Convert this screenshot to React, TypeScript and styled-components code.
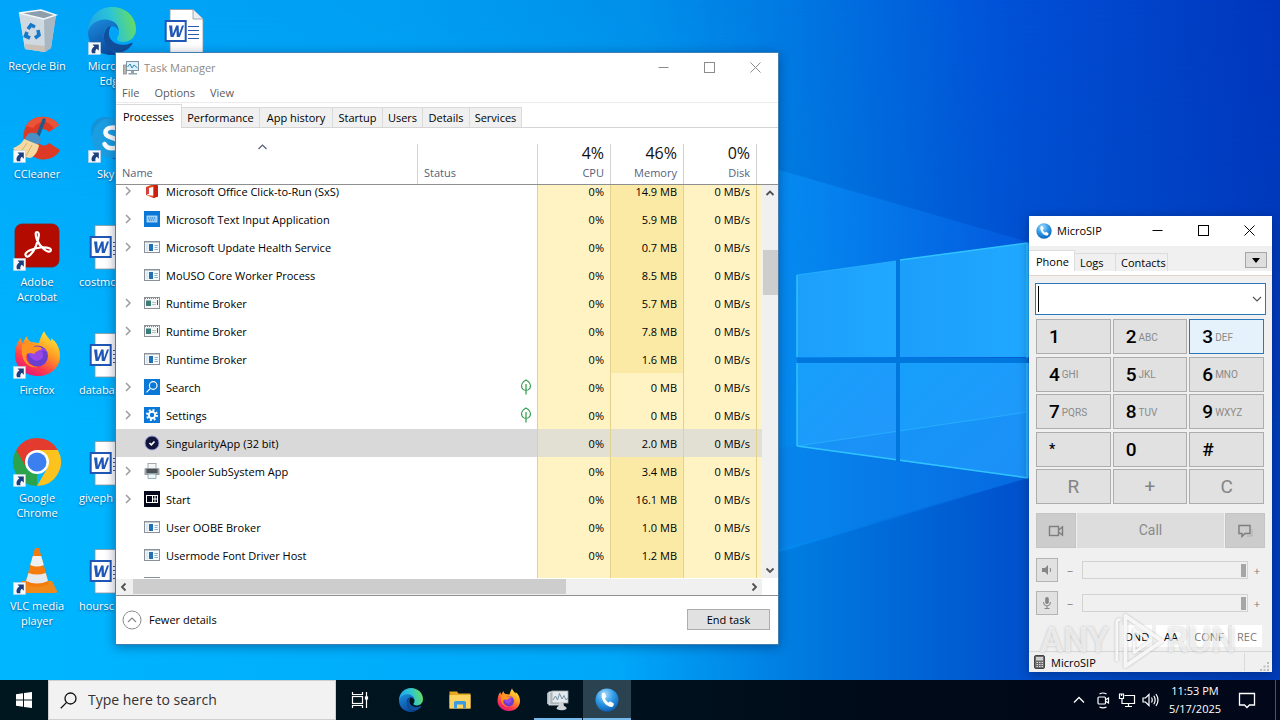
import React from 'react';
import styled, { createGlobalStyle } from 'styled-components';

const GlobalStyle = createGlobalStyle`
  *, *::before, *::after { box-sizing: border-box; }
  html, body { margin: 0; }
  body {
    font-family: "Open Sans", "Noto Sans", sans-serif;
    font-size: 11px;
    line-height: 15px;
    color: #000;
    overflow: hidden;
  }
  button, input { font: inherit; color: inherit; margin: 0; }
`;

/* ---------- Desktop ---------- */

const Screen = styled.div`
  display: flex;
  flex-direction: column;
  min-height: 100vh;
  position: relative;
  overflow: hidden;
  background: #0078d7;
`;

const WallpaperSvg = styled.svg`
  position: absolute;
  inset: 0;
  width: 100%;
  height: 100%;
`;

const DesktopArea = styled.main`
  position: relative;
  flex: 1;
  padding-top: 4px;
`;

const IconGrid = styled.div`
  display: grid;
  grid-template-columns: 74px 76px 74px;
  grid-auto-rows: 108px;
`;

const DesktopItem = styled.a<{ $start?: boolean }>`
  display: flex;
  flex-direction: column;
  align-items: ${(p) => (p.$start ? 'flex-start' : 'center')};
  gap: 2px;
  color: #fff;
  text-decoration: none;
  text-align: center;
  text-shadow: 0 1px 2px rgba(0, 40, 90, 0.7);

  svg { width: 52px; height: 52px; flex: none; ${(p) => (p.$start ? 'margin-left: 12px;' : '')} }
  span { padding: 0 4px; ${(p) => (p.$start ? 'padding-left: 5px;' : '')} }
`;

/* ---------- Shared window parts ---------- */

const AppWindow = styled.section`
  position: absolute;
  display: flex;
  flex-direction: column;
  box-shadow: 0 2px 10px rgba(0, 20, 60, 0.4);
`;

const TaskWindow = styled(AppWindow)`
  left: 115px;
  right: 501px;
  top: 52px;
  background: #fff;
  border: 1px solid #3f7fb4;
`;

const PhoneWindow = styled(AppWindow)`
  right: 8px;
  top: 216px;
  width: 243px;
  background: #f0f0f0;
`;

const TitleBar = styled.header<{ $muted?: boolean }>`
  display: flex;
  align-items: center;
  height: 30px;
  padding-left: 7px;
  padding-bottom: 1px;
  background: #fff;
  color: ${(p) => (p.$muted ? '#8b8b8b' : '#000')};

  > svg { width: 16px; height: 16px; margin-right: 5px; flex: none; }
`;

const TitleText = styled.h1`
  flex: 1;
  margin: 0;
  font-size: 11px;
  font-weight: 400;
`;

const CaptionButton = styled.button`
  width: 46px;
  height: 28px;
  padding: 0;
  border: 0;
  background: transparent;
  display: grid;
  place-items: center;

  svg { width: 11px; height: 11px; }
`;

/* ---------- Task Manager ---------- */

const MenuRow = styled.nav`
  display: flex;
  gap: 15px;
  height: 20px;
  padding: 1px 6px 0;
  border-bottom: 1px solid #ececec;
`;

const MenuButton = styled.button`
  padding: 0;
  border: 0;
  background: none;
  color: #5c5c5c;
  height: 16px;
`;

const TabRow = styled.div`
  display: flex;
  align-items: flex-end;
  height: 25px;
  border-bottom: 1px solid #d5d5d5;
`;

const Tab = styled.button<{ $active?: boolean; $w: number }>`
  width: ${(p) => p.$w}px;
  height: ${(p) => (p.$active ? 24 : 20)}px;
  margin-bottom: ${(p) => (p.$active ? -1 : 0)}px;
  padding: 0;
  border: 1px solid #dadada;
  border-bottom: 0;
  border-left: 0;
  background: ${(p) => (p.$active ? '#fff' : '#f0f0f0')};
  line-height: 18px;
  white-space: nowrap;
`;

const ListArea = styled.div`
  display: flex;
`;

const ProcTable = styled.table`
  flex: 1;
  min-width: 0;
  table-layout: fixed;
  border-collapse: separate;
  border-spacing: 0;
`;

const HeadCell = styled.th<{ $right?: boolean; $plain?: boolean }>`
  position: relative;
  height: 57px;
  padding: ${(p) => (p.$plain ? '0' : '0 7px 4px 6px')};
  vertical-align: bottom;
  text-align: ${(p) => (p.$right ? 'right' : 'left')};
  font-weight: 400;
  color: #55627c;
  border-bottom: 1px solid #8f8f8f;
  background: ${(p) => (p.$plain ? '#fff' : 'linear-gradient(#d2d2d2, #d2d2d2) right bottom / 1px 40px no-repeat')};

  strong { display: block; font-weight: 400; font-size: 16px; line-height: 24px; color: #111; }
`;

const SortMark = styled.svg`
  position: absolute;
  left: 50%;
  top: 16px;
  width: 9px;
  height: 6px;
  margin-left: -9px;
`;

const heat = {
  none: 'transparent',
  light: '#fff3c4',
  medium: '#faeaa6',
  selected: '#e2dfd3',
};

const ProcRow = styled.tr<{ $selected?: boolean }>`
  background: ${(p) => (p.$selected ? '#d9d9d9' : 'transparent')};
`;

const ProcCell = styled.td<{ $heat?: keyof typeof heat }>`
  padding: 0;
  background: ${(p) => heat[p.$heat || 'none']};
  border-right: ${(p) => (p.$heat ? '1px solid #e3d28e' : '0')};
`;

const EdgeCell = styled(ProcCell)`
  border-right: 0;
`;

const StatusCell = styled(ProcCell)`
  border-right: 1px solid #e3d28e;
`;

const Clip = styled.div<{ $h: number }>`
  height: ${(p) => p.$h}px;
  overflow: hidden;
  display: flex;
  align-items: ${(p) => (p.$h < 28 && p.$h > 9 ? 'flex-end' : 'flex-start')};
`;

const CellBody = styled.div<{ $right?: boolean }>`
  flex: 1;
  min-width: 0;
  height: 28px;
  flex-shrink: 0;
  display: flex;
  align-items: center;
  justify-content: ${(p) => (p.$right ? 'flex-end' : 'flex-start')};
  padding-right: ${(p) => (p.$right ? 6 : 0)}px;
  white-space: nowrap;
`;

const Expander = styled.span`
  width: 28px;
  padding-left: 9px;
  display: flex;
  flex: none;
  svg { width: 6px; height: 10px; }
`;

const ProcIcon = styled.span`
  display: flex;
  margin-right: 6px;
  svg { width: 16px; height: 16px; }
`;

const ScrollColumn = styled.div`
  flex: none;
  width: 16px;
  display: flex;
  flex-direction: column;
`;

const HeadFiller = styled.div`
  height: 57px;
  border-bottom: 1px solid #8f8f8f;
`;

const VTrack = styled.div`
  flex: 1;
  display: flex;
  flex-direction: column;
  align-items: flex-end;
  background: #f0f0f0;
`;

const ArrowButton = styled.button`
  width: 16px;
  height: 16px;
  padding: 0;
  border: 0;
  flex: none;
  background: #f0f0f0;
  display: grid;
  place-items: center;
  svg { width: 10px; height: 10px; }
`;

const VThumb = styled.div`
  width: 15px;
  height: 45px;
  margin: 49px 0 auto;
  background: #cdcdcd;
`;

const HTrack = styled.div`
  display: flex;
  height: 16px;
  margin: 1px 16px 0 0;
  background: #f0f0f0;
`;

const HThumb = styled.div`
  width: 67%;
  height: 15px;
  margin: 0 auto 0 1px;
  background: #cdcdcd;
`;

const Footer = styled.footer`
  display: flex;
  align-items: center;
  justify-content: space-between;
  height: 49px;
  padding: 0 8px 1px 6px;
  border-top: 1px solid #8f8f8f;
`;

const FewerButton = styled.button`
  display: flex;
  align-items: center;
  gap: 7px;
  padding: 0;
  border: 0;
  background: none;
  svg { width: 20px; height: 20px; }
`;

const EndTask = styled.button`
  width: 83px;
  height: 21px;
  padding: 0;
  border: 1px solid #adadad;
  background: #e1e1e1;
`;

/* ---------- MicroSIP ---------- */

const PhoneTabs = styled.div`
  display: flex;
  align-items: flex-end;
  height: 25px;
`;

const PhoneTab = styled.button<{ $active?: boolean; $w: number }>`
  width: ${(p) => p.$w}px;
  height: ${(p) => (p.$active ? 21 : 18)}px;
  padding: 0 0 0 ${(p) => (p.$active ? 7 : 5)}px;
  text-align: left;
  border: 1px solid #dcdcdc;
  border-bottom: 0;
  border-left: 0;
  background: ${(p) => (p.$active ? '#fff' : '#f0f0f0')};
  line-height: 17px;
`;

const MenuDrop = styled.button`
  width: 22px;
  height: 16px;
  margin: 0 5px 3px auto;
  padding: 0;
  border: 1px solid #a6a6a6;
  background: #dedede;
  display: grid;
  place-items: center;
  svg { width: 8px; height: 5px; }
`;

const PhoneStrip = styled.div`
  background: #fff;
  height: 5px;
  border-bottom: 1px solid #e5d3c8;
`;

const PhoneBody = styled.div`
  padding: 7px 6px 0;
`;

const DialBox = styled.label`
  display: flex;
  align-items: center;
  height: 32px;
  padding: 3px 3px 3px 2px;
  border: 1px solid #2a78b8;
  background: #fff;

  input {
    flex: 1;
    min-width: 0;
    height: 26px;
    padding: 0 2px;
    border: 0;
    border-left: 1px solid #000;
    outline: 0;
    background: transparent;
    font-size: 16px;
  }
  svg { width: 10px; height: 8px; }
`;

const Keypad = styled.div`
  display: grid;
  grid-template-columns: repeat(3, 1fr);
  grid-auto-rows: 35px;
  gap: 2px;
  align-content: space-between;
  min-height: 185px;
  margin: 4px 2px 0 1px;
`;

const Key = styled.button<{ $hot?: boolean; $func?: boolean; $small?: boolean }>`
  display: flex;
  align-items: center;
  justify-content: ${(p) => (p.$func ? 'center' : 'flex-start')};
  gap: 2px;
  padding: 0 0 0 ${(p) => (p.$func ? 0 : 12)}px;
  border: 1px solid ${(p) => (p.$hot ? '#2a78b8' : '#adadad')};
  background: ${(p) => (p.$hot ? '#e5f1fb' : '#e1e1e1')};
  font-family: Roboto, "Liberation Sans", sans-serif;
  font-size: ${(p) => (p.$small ? 14 : 19)}px;
  color: ${(p) => (p.$func ? '#848484' : '#000')};

  b { font-weight: 500; }
  small { font-size: 10px; color: #8a8a8a; padding-top: 1px; }
`;

const CallRow = styled.div`
  display: grid;
  grid-template-columns: 40px 1fr 40px;
  gap: 1px;
  height: 35px;
  margin: 9px 1px 10px 1px;
`;

const CallButton = styled.button<{ $side?: boolean }>`
  display: grid;
  place-items: center;
  padding: 0;
  border: ${(p) => (p.$side ? '1px solid #c4c4c4' : '0')};
  background: ${(p) => (p.$side ? '#cccccc' : '#dddddd')};
  color: #8a8a8a;
  font-family: Roboto, "Liberation Sans", sans-serif;
  font-size: 14px;
  svg { width: 16px; height: 16px; }
`;

const VolumeRow = styled.div`
  display: grid;
  grid-template-columns: 22px 24px 1fr 18px;
  align-items: center;
  height: 24px;
  margin: 0 0 9px 1px;
  color: #777;

  > span { text-align: center; }
`;

const MuteButton = styled.button`
  height: 24px;
  padding: 0;
  border: 1px solid #b4b4b4;
  background: #e1e1e1;
  display: grid;
  place-items: center;
  svg { width: 12px; height: 12px; }
`;

const VolumeSlider = styled.input`
  appearance: none;
  width: 100%;
  height: 18px;
  border: 1px solid #d2d2d2;
  background: #f0f0f0;
  padding: 0 1px;

  &::-webkit-slider-thumb {
    appearance: none;
    width: 5px;
    height: 13px;
    background: #a6a6a6;
  }
`;

const ModeRow = styled.div`
  display: flex;
  justify-content: flex-end;
  gap: 4px;
  padding: 1px 4px 4px 0;
`;

const ModeButton = styled.button<{ $dim?: boolean; $w: number }>`
  width: ${(p) => p.$w}px;
  height: 22px;
  padding: 0;
  border: 0;
  background: #fff;
  color: ${(p) => (p.$dim ? '#7a7a7a' : '#000')};
`;

const StatusBar = styled.footer`
  display: flex;
  align-items: center;
  height: 21px;
  padding: 0 3px 0 5px;
  border-top: 1px solid #d7d7d7;
  gap: 6px;
  svg { width: 11px; height: 14px; }
  span { flex: 1; }
`;

const GripBox = styled.i`
  display: flex;
  align-items: flex-end;
  justify-content: flex-end;
  width: 25px;
  height: 18px;
  border-left: 1px solid #dadada;
  svg { width: 9px; height: 9px; }
`;

const Watermark = styled.div`
  position: absolute;
  left: 11px;
  bottom: 0;
  width: 196px;
  height: 62px;
  display: flex;
  align-items: center;
  justify-content: space-between;
  pointer-events: none;
  font-family: Roboto, sans-serif;
  font-size: 35px;
  font-weight: 500;
  line-height: 40px;
  color: rgba(255, 255, 255, 0.65);
  text-shadow: 0 0 3px rgba(0, 0, 0, 0.22);
  svg { flex: none; width: 54px; height: 60px; filter: drop-shadow(0 0 1px rgba(0, 0, 0, 0.3)); }
`;

/* ---------- Taskbar ---------- */

const Taskbar = styled.nav`
  position: relative;
  display: flex;
  height: 40px;
  background: linear-gradient(90deg, #001720 0%, #00131f 45%, #000a18 70%, #020819 100%);
  color: #fff;
`;

const StartButton = styled.button`
  width: 48px;
  padding: 0;
  border: 0;
  background: none;
  display: grid;
  place-items: center;
  svg { width: 18px; height: 18px; }
`;

const SearchBox = styled.label`
  display: flex;
  align-items: center;
  gap: 11px;
  width: 288px;
  height: 40px;
  padding: 0 11px;
  background: #f2f2f2;
  border: 1px solid #cfcfcf;
  svg { width: 17px; height: 17px; }
  input {
    flex: 1;
    min-width: 0;
    border: 0;
    padding: 0;
    outline: 0;
    background: transparent;
    color: #333;
    font-size: 14px;
    line-height: 20px;
  }
  input::placeholder { color: #333; opacity: 1; }
`;

const AppStrip = styled.div`
  display: flex;
  gap: 1px;
  margin-left: 3px;
`;

const TaskButton = styled.button<{ $state?: 'running' | 'active' }>`
  width: 48px;
  padding: 0;
  border: 0;
  display: grid;
  place-items: center;
  background: ${(p) => (p.$state === 'active' ? '#2b4350' : 'transparent')};
  box-shadow: ${(p) => (p.$state ? 'inset 0 -2px 0 #76b9ed' : 'none')};
  svg { width: 24px; height: 24px; }
`;

const Tray = styled.div`
  display: flex;
  align-items: center;
  margin-left: auto;
  height: 40px;
  padding-right: 4px;
`;

const TrayButton = styled.button`
  width: 24px;
  height: 40px;
  padding: 0;
  border: 0;
  background: none;
  display: grid;
  place-items: center;
  svg { width: 18px; height: 18px; }
`;

const Clock = styled.time`
  width: 64px;
  text-align: center;
  line-height: 18px;
`;

const Notify = styled(TrayButton)`
  width: 40px;
`;

const ShowDesktop = styled.span`
  width: 9px;
  height: 40px;
  border-right: 1px solid #4b5561;
`;

/* ---------- Drawings ---------- */

const Wallpaper = () => (
  <WallpaperSvg viewBox="0 0 1280 720" preserveAspectRatio="none" aria-hidden="true">
    <defs>
      <linearGradient id="sky" x1="0" y1="0" x2="1" y2="0">
        <stop offset="0" stopColor="#00a6f9" />
        <stop offset="0.3" stopColor="#009ff3" />
        <stop offset="0.5" stopColor="#0090ea" />
        <stop offset="0.62" stopColor="#0078e2" />
        <stop offset="0.78" stopColor="#0052d8" />
        <stop offset="1" stopColor="#0036bd" />
      </linearGradient>
      <linearGradient id="low" x1="0" y1="0" x2="1" y2="0">
        <stop offset="0" stopColor="#00b6ff" />
        <stop offset="0.48" stopColor="#00a8fa" />
        <stop offset="0.62" stopColor="#007ce0" />
        <stop offset="0.8" stopColor="#0050cc" />
        <stop offset="1" stopColor="#003cba" />
      </linearGradient>
      <linearGradient id="lowFade" x1="0" y1="0" x2="0" y2="1">
        <stop offset="0" stopColor="#fff" stopOpacity="0" />
        <stop offset="0.6" stopColor="#fff" stopOpacity="1" />
      </linearGradient>
      <mask id="lowMask"><rect width="1280" height="720" fill="url(#lowFade)" /></mask>
      <linearGradient id="beam" x1="0" y1="0" x2="1" y2="0">
        <stop offset="0" stopColor="#0aa4ff" stopOpacity="0.9" />
        <stop offset="0.5" stopColor="#0a94ff" stopOpacity="0.8" />
        <stop offset="1" stopColor="#0a70f8" stopOpacity="0.5" />
      </linearGradient>
      <linearGradient id="pane" x1="0" y1="0" x2="1" y2="0">
        <stop offset="0" stopColor="#1c9ffb" />
        <stop offset="1" stopColor="#20a8ff" />
      </linearGradient>
      <linearGradient id="paneLow" x1="0" y1="0" x2="1" y2="1">
        <stop offset="0" stopColor="#169ffb" />
        <stop offset="1" stopColor="#2397fb" />
      </linearGradient>
    </defs>
    <rect width="1280" height="720" fill="url(#sky)" />
    <rect width="1280" height="720" fill="url(#low)" mask="url(#lowMask)" />
    <path d="M600 118 L1028 242 L1028 478 L780 552 L600 600 Z" fill="url(#beam)" opacity="0.6" />
    <path d="M600 475 L1028 412 L1028 478 L600 600 Z" fill="#0b7fe8" opacity="0.45" />
    <path d="M797 275 L896 261 V357 H797 Z" fill="url(#pane)" />
    <path d="M900 260 L1030 243 V357 H900 Z" fill="url(#pane)" />
    <path d="M797 363 H896 V460 L797 446 Z" fill="url(#paneLow)" />
    <path d="M900 363 H1030 V478 L900 461 Z" fill="url(#paneLow)" />
    <path d="M797 446 L1028 412 V478 Z" fill="#1489f2" opacity="0.45" />
    <path d="M797 275 V357 M797 363 V446 M797 446 L1028 478 M1027 243 V478 M900 260 L1028 243" fill="none" stroke="#30c4ff" strokeWidth="1.5" />
    <path d="M797 275 L896 261 M797 446 L1028 412" fill="none" stroke="#2bb8ff" strokeWidth="1" opacity="0.7" />
    <path d="M797 358 H1028 V363 H797 Z M896 260 H900 V462 H896 Z" fill="#0077dd" />
  </WallpaperSvg>
);

const Shortcut = () => (
  <g>
    <rect x="2.500" y="38.500" width="12" height="12" fill="#f7fafd" stroke="#bcd3e6" strokeWidth="0.600" />
    <path d="M6.500 40.500 H12.800 V46.800 L10.800 44.800 C9.500 45.800 9 47.500 9.500 49.200 H6 C4.800 46.500 5.800 44 8.400 42.400 Z" fill="#1d3f7d" />
  </g>
);

const BinArt = () => (
  <svg viewBox="0 0 52 52">
    <path d="M8 9 L30 6 L45 11 L40 44 L34 48 L14 45 Z" fill="#cdd7df" opacity="0.92" />
    <path d="M8 9 L33 15 L34 48 L14 45 Z" fill="#cfd9e1" />
    <path d="M33 15 L45 11 L40 44 L34 48 Z" fill="#a9b7c2" />
    <path d="M8 9 L30 6 L45 11 L33 15 Z" fill="#8c9eac" stroke="#f3f7fa" strokeWidth="1.400" />
    <path d="M14 40 L34 42 V48 L14 45 Z" fill="#c7b5a6" opacity="0.7" />
    <g fill="none" stroke="#1777c9" strokeWidth="3.600">
      <path d="M17 25 L20 21 L24 23" />
      <path d="M27 26 L28 31 L24 34" />
      <path d="M19 34 L14.500 32 L16 28" />
    </g>
  </svg>
);

const EdgeShape = ({ id }: { id: string }) => (
  <g>
    <defs>
      <linearGradient id={id + 'a'} x1="0" y1="0.500" x2="1" y2="0.300">
        <stop offset="0" stopColor="#1fa5e8" />
        <stop offset="0.500" stopColor="#2cc4d6" />
        <stop offset="1" stopColor="#6ade5a" />
      </linearGradient>
      <linearGradient id={id + 'b'} x1="0" y1="0" x2="0.500" y2="1">
        <stop offset="0" stopColor="#1c8fe0" />
        <stop offset="1" stopColor="#0a4a9e" />
      </linearGradient>
    </defs>
    <path d="M24 0 C38 0 48 10 48 22 C48 31 41 35 35 35 C31 35 29 33.500 29 31.500 C29 30 31 29 31 25.500 C31 20 26 15.500 19 15.500 C8 15.500 1 24 0 25 C0 10 11 0 24 0 Z" fill={`url(#${id}a)`} />
    <path d="M0 25 C1 19 8 12 18 12.500 C26 13 31 18 31 25 C31 22 27 19 23.500 19 C18 19 15 25 16 31 C17 40 25 47 33 46 C30 47.500 27 48 24 48 C10 48 0 38 0 25 Z" fill={`url(#${id}b)`} />
    <path d="M16 29 C15 40 25 47 33 45.500 C38 44 42 41 44.500 37 C45 36 44 35.500 43 36 C35 40 25 37 22 31 C20 27 21 21 23.500 19 C19 19 16 24 16 29 Z" fill="#114f9c" />
  </g>
);

const EdgeArt = () => (
  <svg viewBox="0 0 52 52">
    <g transform="translate(2 3)"><EdgeShape id="ed" /></g>
    <Shortcut />
  </svg>
);

const DocArt = () => (
  <svg viewBox="0 0 52 52">
    <path d="M9 5.500 H32 L42 15 V49 H9 Z" fill="#fff" stroke="#8a95a0" strokeWidth="0.8" />
    <path d="M32 5.500 V15 H42" fill="#e9eef3" stroke="#8a95a0" strokeWidth="0.8" />
    <path d="M27 22.500 H38 M27 26.500 H38 M27 30.500 H38 M27 34.500 H38" stroke="#2a5cb0" strokeWidth="1.200" />
    <rect x="4.700" y="17" width="20" height="20" fill="#fff" stroke="#1e57b5" strokeWidth="2" />
    <path d="M8 21.500 H11.200 L11.800 30 L15.200 21.500 H17.600 L18 30 L21 21.500 H23 L18.800 33 H15.800 L15.400 26 L12.600 33 H9.600 Z" fill="#1e57b5" />
  </svg>
);

const CCleanerArt = () => (
  <svg viewBox="0 0 52 52">
    <path d="M48 13 C40 2 22 2 15 14 C8 28 16 46 31 47.500 C39 48 46 44 49 38 L38 31 C35 35 29 34 26 29 C23 24 26 17 31 17 C34 17 36 18 38 20 Z" fill="#dc3a24" />
    <path d="M48 13 C40 2 22 2 15 14 L22 16 C29 8 38 8 43 17 Z" fill="#e95437" />
    <path d="M33 8 L26 26" stroke="#215a8d" strokeWidth="3.500" strokeLinecap="round" />
    <path d="M17 22 C22 19 29 22 30 28 L26 34 L13 28 Z" fill="#4a90c4" />
    <path d="M13 27 L28 33 C27 40 23 45 19 46 C12 45 5 42 2 36 C8 34 11 31 13 27 Z" fill="#f5d9a3" />
    <path d="M9 41 L16 31 M15 44 L21 33" stroke="#d8ae62" strokeWidth="1" />
    <Shortcut />
  </svg>
);

const SkypeArt = () => (
  <svg viewBox="0 0 52 52">
    <circle cx="19" cy="19" r="14" fill="#1492d8" />
    <circle cx="33" cy="34" r="14" fill="#0b63b8" />
    <circle cx="26" cy="26" r="20" fill="#1b9de2" />
    <path d="M33 19 C31 14.500 20 14 19.500 20.500 C19.500 27 33 24.500 33 31.500 C32.500 38 21 37.500 18.500 32" fill="none" stroke="#fff" strokeWidth="4.500" strokeLinecap="round" />
    <Shortcut />
  </svg>
);

const AcrobatArt = () => (
  <svg viewBox="0 0 52 52">
    <rect x="4" y="4" width="44" height="43" rx="7" fill="#b30b00" stroke="#8e1a12" strokeWidth="0.8" />
    <path d="M15 36 C12 32 22 28 30 27.500 C38 27 41 29 39.500 31 C37 34 29 27 26 20 C24 14 24.500 12 26 12 C29 12 28 18 25 26 C22 33 17 38.500 15 36 Z" fill="none" stroke="#fff" strokeWidth="2.200" />
    <Shortcut />
  </svg>
);

const FoxShape = ({ id }: { id: string }) => (
  <g>
    <defs>
      <linearGradient id={id} x1="0.800" y1="0.050" x2="0.250" y2="0.950">
        <stop offset="0" stopColor="#ffe83a" />
        <stop offset="0.400" stopColor="#ff9a22" />
        <stop offset="0.750" stopColor="#ff3a4e" />
        <stop offset="1" stopColor="#e01a78" />
      </linearGradient>
    </defs>
    <path d="M2 18 C3 12 6 9 7 8 C7 11 8 12 9 13 C11 8 13 6 13 6 C13 9 15 11 17 12 L25 13 C26 8 29 3 30 1 C32 6 35 8 37 11 C38 10 37 9 37 8 C43 12 46 19 46 26 C46 38 36 46 24 46 C11 46 1 37 1 25 C1 22 1.500 20 2 18 Z" fill={`url(#${id})`} />
    <circle cx="23.500" cy="26" r="10.500" fill="#6a3fd0" />
    <path d="M14 21 C18 16 29 15 33 22 C30 20 28 21 27 21 C30 23 30 28 26 30 C20 33 15 27 14 21 Z" fill="#9a47e8" />
    <path d="M8 15 C12 12 18 14 21 17 C24 16 28 17 28 19 C26 20 22 21 20 24 C18 23 15 22 12 25 C11 32 17 37 24 37 C14 39 6 31 8 15 Z" fill="#ff9420" />
  </g>
);

const FirefoxArt = () => (
  <svg viewBox="0 0 52 52">
    <g transform="translate(3 2)"><FoxShape id="fxd" /></g>
    <Shortcut />
  </svg>
);

const ChromeArt = () => (
  <svg viewBox="0 0 52 52">
    <path d="M26 26 L26 50 A24 24 0 0 1 5.200 14 Z" fill="#2ba24c" />
    <path d="M26 14 H46.800 A24 24 0 0 0 5.200 14 L15.600 32 Z" fill="#e33b2e" />
    <path d="M46.800 14 H26 L36.400 32 L26 50 A24 24 0 0 0 46.800 14 Z" fill="#fcc31e" />
    <circle cx="26" cy="26" r="12" fill="#fff" />
    <circle cx="26" cy="26" r="9.500" fill="#3b7ff0" />
    <Shortcut />
  </svg>
);

const VlcArt = () => (
  <svg viewBox="0 0 52 52">
    <path d="M11 37 H41 L46 47 Q46.500 49 44 49 H9 Q6.500 49 7.500 47 Z" fill="#f08a1c" />
    <path d="M24 4 H28 L38 40 Q26 46 14 40 Z" fill="#f57c0c" />
    <path d="M21.800 12 H30.200 L32.800 21 Q26 24 19.200 21 Z" fill="#eef0f2" />
    <path d="M17.500 29 Q26 32 34.700 29 L37 37 Q26 42 15 37 Z" fill="#e6e9ec" />
    <Shortcut />
  </svg>
);

const MonitorIcon = () => (
  <svg viewBox="0 0 16 16">
    <rect x="0.500" y="5" width="3" height="9" fill="#b9b3a6" stroke="#7a8890" strokeWidth="0.700" />
    <rect x="3.500" y="1.500" width="12" height="9" fill="#dff2fb" stroke="#7c95a5" />
    <path d="M4.500 7 L7 4 L9 8 L11 5 L14.500 8" fill="none" stroke="#2887b6" />
    <path d="M8 11 H11 V13 H14 V14.500 H5.500 V13 H8 Z" fill="#8fa4ae" />
  </svg>
);

const PhoneBall = ({ id }: { id: string }) => (
  <svg viewBox="0 0 24 24">
    <defs>
      <radialGradient id={id} cx="0.400" cy="0.250" r="0.800">
        <stop offset="0" stopColor="#a5dcff" />
        <stop offset="0.500" stopColor="#2f9be6" />
        <stop offset="1" stopColor="#0b5db4" />
      </radialGradient>
    </defs>
    <circle cx="12" cy="12" r="11.500" fill={`url(#${id})`} />
    <path d="M7 5 L9.500 4.500 L11.500 8.800 L10 10.300 C10.500 12 12 13.800 13.500 14.500 L15.200 13.300 L19 15.800 L18 18.500 C13 21 4.500 12 7 5 Z" fill="#fff" />
  </svg>
);

const MinGlyph = () => <svg viewBox="0 0 11 11"><path d="M0.500 5.500 H10.500" stroke="currentColor" /></svg>;
const MaxGlyph = () => <svg viewBox="0 0 11 11"><rect x="0.500" y="0.500" width="10" height="10" fill="none" stroke="currentColor" /></svg>;
const CloseGlyph = () => <svg viewBox="0 0 11 11"><path d="M0.500 0.500 L10.500 10.500 M10.500 0.500 L0.500 10.500" stroke="currentColor" /></svg>;

const CaptionButtons = () => (
  <>
    <CaptionButton aria-label="Minimize"><MinGlyph /></CaptionButton>
    <CaptionButton aria-label="Maximize"><MaxGlyph /></CaptionButton>
    <CaptionButton aria-label="Close"><CloseGlyph /></CaptionButton>
  </>
);

const chevrons = {
  up: 'M1.500 7 L5 3.500 L8.500 7',
  down: 'M1.500 3.500 L5 7 L8.500 3.500',
  left: 'M6.500 1.500 L3 5 L6.500 8.500',
  right: 'M3.500 1.500 L7 5 L3.500 8.500',
};

const Chevron = ({ dir }: { dir: keyof typeof chevrons }) => (
  <svg viewBox="0 0 10 10"><path d={chevrons[dir]} fill="none" stroke="#505050" strokeWidth="1.800" /></svg>
);

type IconKind = 'office' | 'keyboard' | 'exe' | 'broker' | 'search' | 'settings' | 'check' | 'printer' | 'start' | 'edge';

const RowIcon = ({ kind }: { kind: IconKind }) => {
  switch (kind) {
    case 'office':
      return (
        <svg viewBox="0 0 16 16">
          <path d="M2 4 L9.500 1 L14 2.500 V13.500 L9.500 15 L2 12 L9.500 12.800 V3.700 L5 5 V10.500 L2 12 Z" fill="#e8481c" />
          <path d="M9.500 1 L14 2.500 V13.500 L9.500 15 Z" fill="#c9200f" />
          <path d="M2 4 L5 5 V10.500 L2 12 Z" fill="#d3413c" />
        </svg>
      );
    case 'keyboard':
      return (
        <svg viewBox="0 0 16 16">
          <rect width="16" height="16" fill="#0a78d6" />
          <rect x="3" y="5" width="10" height="6" fill="#8cc5f3" stroke="#c6e3fa" strokeWidth="0.800" />
          <path d="M4 7 H12 M5 9 H11" stroke="#2b83cc" strokeDasharray="1 1" />
        </svg>
      );
    case 'exe':
      return (
        <svg viewBox="0 0 16 16">
          <rect x="0.500" y="2.500" width="15" height="11" fill="#fbfcfd" stroke="#8b9196" />
          <path d="M1 3.500 H15" stroke="#c2cbd1" />
          <rect x="1.500" y="4.500" width="3" height="8" fill="#d9ecf6" />
          <rect x="5" y="5" width="4" height="7" fill="#2470b0" />
          <path d="M10.500 6.500 H14 M10.500 8.500 H13.500 M10.500 10.500 H14" stroke="#85b3d6" />
        </svg>
      );
    case 'broker':
      return (
        <svg viewBox="0 0 16 16">
          <rect x="0.500" y="2.500" width="15" height="11" fill="#f4f6f6" stroke="#8b9196" />
          <path d="M1 3.500 H15" stroke="#7b858a" strokeDasharray="1 1" />
          <rect x="2" y="5.500" width="5" height="5.500" fill="#3c7c78" />
          <path d="M8 7.500 H12 M8 9.500 H12" stroke="#b6c4c4" />
          <path d="M13.500 5 V10" stroke="#3a5b5b" />
        </svg>
      );
    case 'search':
      return (
        <svg viewBox="0 0 16 16">
          <rect width="16" height="16" fill="#0a78d6" />
          <circle cx="9.200" cy="6.500" r="3.800" fill="none" stroke="#fff" strokeWidth="1.200" />
          <path d="M6.400 9.300 L2.500 13.300" stroke="#fff" strokeWidth="1.200" />
        </svg>
      );
    case 'settings':
      return (
        <svg viewBox="0 0 16 16">
          <rect width="16" height="16" fill="#0a78d6" />
          <circle cx="8" cy="8" r="3.200" fill="none" stroke="#fff" strokeWidth="2" />
          <circle cx="8" cy="8" r="5" fill="none" stroke="#fff" strokeWidth="2" strokeDasharray="1.960 1.960" />
        </svg>
      );
    case 'check':
      return (
        <svg viewBox="0 0 16 16">
          <circle cx="8" cy="8" r="7" fill="#12163a" stroke="#9a9ee0" strokeWidth="0.900" />
          <path d="M5.500 8 L7.400 9.800 L10.500 6.500" fill="none" stroke="#fff" strokeWidth="1.700" />
        </svg>
      );
    case 'printer':
      return (
        <svg viewBox="0 0 16 16">
          <rect x="4" y="0.500" width="8" height="6" fill="#f5f6f7" stroke="#8f979d" strokeWidth="0.800" />
          <path d="M0.500 6 Q0.500 5 2 5 H14 Q15.500 5 15.500 6 V12 H0.500 Z" fill="#9aa1a6" />
          <rect x="2.500" y="6" width="11" height="4" fill="#4b5157" />
          <path d="M4 11 H12 V15.500 H4 Z" fill="#eef6f8" stroke="#7fa0aa" strokeWidth="0.800" />
        </svg>
      );
    case 'start':
      return (
        <svg viewBox="0 0 16 16">
          <rect width="16" height="16" fill="#04081a" />
          <rect x="2.500" y="4.500" width="11" height="7" fill="none" stroke="#fff" />
          <path d="M8.500 4.500 V11.500 M11 4.500 V11.500 M8.500 8 H13.500" stroke="#fff" />
        </svg>
      );
    default:
      return (
        <svg viewBox="0 0 16 16">
          <path d="M0 2.500 H16" stroke="#8b9196" />
        </svg>
      );
  }
};

const Leaf = () => (
  <svg viewBox="0 0 12 16" width="12" height="16">
    <path d="M6 1 C10 3 11 6.500 10 9 C9 11 7 11.500 6 11.500 C5 11.500 3 11 2 9 C1 6.500 2 3 6 1 Z M6 5 V15.500" fill="none" stroke="#2e9a48" strokeWidth="1.200" />
  </svg>
);

const LeafBox = styled.span`
  display: flex;
  justify-content: flex-end;
  padding-right: 5px;
`;

/* ---------- Data ---------- */

interface Proc {
  name: string;
  icon: IconKind;
  mem: string;
  group?: boolean;
  leaf?: boolean;
  selected?: boolean;
}

const processes: Proc[] = [
  { name: 'Microsoft Office Click-to-Run (SxS)', icon: 'office', mem: '14.9 MB', group: true },
  { name: 'Microsoft Text Input Application', icon: 'keyboard', mem: '5.9 MB', group: true },
  { name: 'Microsoft Update Health Service', icon: 'exe', mem: '0.7 MB', group: true },
  { name: 'MoUSO Core Worker Process', icon: 'exe', mem: '8.5 MB' },
  { name: 'Runtime Broker', icon: 'broker', mem: '5.7 MB', group: true },
  { name: 'Runtime Broker', icon: 'broker', mem: '7.8 MB', group: true },
  { name: 'Runtime Broker', icon: 'exe', mem: '1.6 MB' },
  { name: 'Search', icon: 'search', mem: '0 MB', group: true, leaf: true },
  { name: 'Settings', icon: 'settings', mem: '0 MB', group: true, leaf: true },
  { name: 'SingularityApp (32 bit)', icon: 'check', mem: '2.0 MB', selected: true },
  { name: 'Spooler SubSystem App', icon: 'printer', mem: '3.4 MB', group: true },
  { name: 'Start', icon: 'start', mem: '16.1 MB', group: true },
  { name: 'User OOBE Broker', icon: 'exe', mem: '1.0 MB' },
  { name: 'Usermode Font Driver Host', icon: 'exe', mem: '1.2 MB' },
];

const tabs: [string, number][] = [
  ['Processes', 66],
  ['Performance', 78],
  ['App history', 73],
  ['Startup', 50],
  ['Users', 40],
  ['Details', 47],
  ['Services', 52],
];

const keys: [string, string][] = [
  ['1', ''], ['2', 'ABC'], ['3', 'DEF'],
  ['4', 'GHI'], ['5', 'JKL'], ['6', 'MNO'],
  ['7', 'PQRS'], ['8', 'TUV'], ['9', 'WXYZ'],
  ['*', ''], ['0', ''], ['#', ''],
];

/* ---------- Composition ---------- */

const DesktopIcons = () => (
  <IconGrid>
    <DesktopItem href="#bin"><BinArt /><span>Recycle Bin</span></DesktopItem>
    <DesktopItem href="#edge"><EdgeArt /><span>Microsoft Edge</span></DesktopItem>
    <DesktopItem href="#doc" aria-label="Document"><DocArt /></DesktopItem>

    <DesktopItem href="#ccleaner"><CCleanerArt /><span>CCleaner</span></DesktopItem>
    <DesktopItem href="#skype"><SkypeArt /><span>Skype</span></DesktopItem>
    <i />

    <DesktopItem href="#acrobat"><AcrobatArt /><span>Adobe Acrobat</span></DesktopItem>
    <DesktopItem href="#d1" $start><DocArt /><span>costmo</span></DesktopItem>
    <i />

    <DesktopItem href="#firefox"><FirefoxArt /><span>Firefox</span></DesktopItem>
    <DesktopItem href="#d2" $start><DocArt /><span>databa</span></DesktopItem>
    <i />

    <DesktopItem href="#chrome"><ChromeArt /><span>Google Chrome</span></DesktopItem>
    <DesktopItem href="#d3" $start><DocArt /><span>giveph</span></DesktopItem>
    <i />

    <DesktopItem href="#vlc"><VlcArt /><span>VLC media player</span></DesktopItem>
    <DesktopItem href="#d4" $start><DocArt /><span>hoursc</span></DesktopItem>
  </IconGrid>
);

const ProcessRow = ({ p, h }: { p: Proc; h: number }) => {
  const base = p.selected ? 'selected' : 'light';
  const memHeat = p.selected ? 'selected' : p.mem === '0 MB' ? 'light' : 'medium';
  return (
    <ProcRow $selected={p.selected}>
      <ProcCell>
        <Clip $h={h}>
          <CellBody>
            <Expander>
              {p.group && (
                <svg viewBox="0 0 6 10"><path d="M1 1 L5 5 L1 9" fill="none" stroke="#9a9a9a" strokeWidth="1.500" /></svg>
              )}
            </Expander>
            <ProcIcon><RowIcon kind={p.icon} /></ProcIcon>
            {p.name}
          </CellBody>
        </Clip>
      </ProcCell>
      <StatusCell>{p.leaf && <LeafBox><Leaf /></LeafBox>}</StatusCell>
      <ProcCell $heat={base}><Clip $h={h}><CellBody $right>0%</CellBody></Clip></ProcCell>
      <ProcCell $heat={memHeat}><Clip $h={h}><CellBody $right>{p.mem}</CellBody></Clip></ProcCell>
      <ProcCell $heat={base}><Clip $h={h}><CellBody $right>0 MB/s</CellBody></Clip></ProcCell>
      <EdgeCell $heat={base} />
    </ProcRow>
  );
};

const TaskManager = () => (
  <TaskWindow aria-label="Task Manager">
    <TitleBar $muted>
      <MonitorIcon />
      <TitleText>Task Manager</TitleText>
      <CaptionButtons />
    </TitleBar>
    <MenuRow>
      <MenuButton>File</MenuButton>
      <MenuButton>Options</MenuButton>
      <MenuButton>View</MenuButton>
    </MenuRow>
    <TabRow role="tablist">
      {tabs.map(([label, w], i) => (
        <Tab key={label} role="tab" aria-selected={i === 0} $active={i === 0} $w={w}>{label}</Tab>
      ))}
    </TabRow>
    <ListArea>
      <ProcTable>
        <colgroup>
          <col />
          <col width="120" />
          <col width="73" />
          <col width="73" />
          <col width="73" />
          <col width="5" />
        </colgroup>
        <thead>
          <tr>
            <HeadCell>
              <SortMark viewBox="0 0 9 6"><path d="M0.500 5 L4.500 1 L8.500 5" fill="none" stroke="#555f70" strokeWidth="1.200" /></SortMark>
              Name
            </HeadCell>
            <HeadCell>Status</HeadCell>
            <HeadCell $right><strong>4%</strong>CPU</HeadCell>
            <HeadCell $right><strong>46%</strong>Memory</HeadCell>
            <HeadCell $right><strong>0%</strong>Disk</HeadCell>
            <HeadCell $plain />
          </tr>
        </thead>
        <tbody>
          {processes.map((p, i) => (
            <ProcessRow key={i} p={p} h={i === 0 ? 20 : 28} />
          ))}
          <ProcRow>
            <ProcCell>
              <Clip $h={9}>
                <CellBody>
                  <Expander />
                  <ProcIcon><RowIcon kind="edge" /></ProcIcon>
                </CellBody>
              </Clip>
            </ProcCell>
            <StatusCell />
            <ProcCell $heat="light" />
            <ProcCell $heat="medium" />
            <ProcCell $heat="light" />
            <EdgeCell $heat="light" />
          </ProcRow>
        </tbody>
      </ProcTable>
      <ScrollColumn>
        <HeadFiller />
        <VTrack>
          <ArrowButton aria-label="Scroll up"><Chevron dir="up" /></ArrowButton>
          <VThumb />
          <ArrowButton aria-label="Scroll down"><Chevron dir="down" /></ArrowButton>
        </VTrack>
      </ScrollColumn>
    </ListArea>
    <HTrack>
      <ArrowButton aria-label="Scroll left"><Chevron dir="left" /></ArrowButton>
      <HThumb />
      <ArrowButton aria-label="Scroll right"><Chevron dir="right" /></ArrowButton>
    </HTrack>
    <Footer>
      <FewerButton>
        <svg viewBox="0 0 20 20">
          <circle cx="10" cy="10" r="9" fill="none" stroke="#8b8b8b" />
          <path d="M6 12 L10 8 L14 12" fill="none" stroke="#8b8b8b" strokeWidth="1.200" />
        </svg>
        Fewer details
      </FewerButton>
      <EndTask>End task</EndTask>
    </Footer>
  </TaskWindow>
);

const MicroSip = () => (
  <PhoneWindow aria-label="MicroSIP">
    <TitleBar>
      <PhoneBall id="ballTitle" />
      <TitleText>MicroSIP</TitleText>
      <CaptionButtons />
    </TitleBar>
    <PhoneTabs role="tablist">
      <PhoneTab role="tab" $active $w={46}>Phone</PhoneTab>
      <PhoneTab role="tab" $w={41}>Logs</PhoneTab>
      <PhoneTab role="tab" $w={52}>Contacts</PhoneTab>
      <MenuDrop aria-label="Menu"><svg viewBox="0 0 8 5"><path d="M0 0 H8 L4 5 Z" /></svg></MenuDrop>
    </PhoneTabs>
    <PhoneStrip />
    <PhoneBody>
      <DialBox>
        <input type="text" aria-label="Number" />
        <svg viewBox="0 0 10 8"><path d="M1 2 L5 6 L9 2" fill="none" stroke="#555" strokeWidth="1.200" /></svg>
      </DialBox>
      <Keypad>
        {keys.map(([d, letters]) => (
          <Key key={d} $hot={d === '3'} $small={d === '*'}><b>{d}</b>{letters && <small>{letters}</small>}</Key>
        ))}
        <Key $func>R</Key>
        <Key $func>+</Key>
        <Key $func>C</Key>
      </Keypad>
      <CallRow>
        <CallButton $side aria-label="Video call">
          <svg viewBox="0 0 16 16" fill="none" stroke="#7d7d7d" strokeWidth="1.400"><rect x="1.500" y="3.500" width="9" height="9" /><path d="M10.500 7 L14.500 4 V12 L10.500 9" /></svg>
        </CallButton>
        <CallButton>Call</CallButton>
        <CallButton $side aria-label="Message">
          <svg viewBox="0 0 16 16" fill="none" stroke="#7d7d7d" strokeWidth="1.400"><path d="M2 2.500 H13 V10.500 H8 L5 13.500 V10.500 H2 Z" /><path d="M15 6 V13 H10" strokeWidth="1" stroke="#b0b0b0" /></svg>
        </CallButton>
      </CallRow>
      <VolumeRow>
        <MuteButton aria-label="Mute speaker">
          <svg viewBox="0 0 12 12"><path d="M1 4 H4 L7 1 V11 L4 8 H1 Z" fill="#858585" /><path d="M9 4 Q10.500 6 9 8" fill="none" stroke="#858585" /></svg>
        </MuteButton>
        <span>−</span>
        <VolumeSlider type="range" defaultValue={100} aria-label="Speaker volume" />
        <span>+</span>
      </VolumeRow>
      <VolumeRow>
        <MuteButton aria-label="Mute microphone">
          <svg viewBox="0 0 12 12"><rect x="4.200" y="0" width="3.600" height="7" rx="1.800" fill="#858585" /><path d="M2.500 5 Q2.500 9 6 9 Q9.500 9 9.500 5 M6 9 V11.500 M3.500 11.500 H8.500" fill="none" stroke="#858585" /></svg>
        </MuteButton>
        <span>−</span>
        <VolumeSlider type="range" defaultValue={100} aria-label="Microphone volume" />
        <span>+</span>
      </VolumeRow>
      <ModeRow>
        <ModeButton $w={30}>DND</ModeButton>
        <ModeButton $w={30}>AA</ModeButton>
        <ModeButton $w={38} $dim>CONF</ModeButton>
        <ModeButton $w={30} $dim>REC</ModeButton>
      </ModeRow>
    </PhoneBody>
    <StatusBar>
      <svg viewBox="0 0 11 14"><rect x="0.500" y="0.500" width="10" height="13" rx="1.500" fill="#6b6b6b" stroke="#444" /><rect x="2" y="2" width="7" height="3.500" fill="#cfcfcf" /><path d="M2.500 7.500 H9 M2.500 9.500 H9 M2.500 11.500 H9" stroke="#ddd" strokeDasharray="1.500 1" /></svg>
      <span>MicroSIP</span>
      <GripBox><svg viewBox="0 0 9 9"><path d="M7 0 H9 V2 H7 Z M7 3.500 H9 V5.500 H7 Z M7 7 H9 V9 H7 Z M3.500 3.500 H5.500 V5.500 H3.500 Z M3.500 7 H5.500 V9 H3.500 Z M0 7 H2 V9 H0 Z" fill="#bdbdbd" /></svg></GripBox>
    </StatusBar>
    <Watermark>
      <span>ANY</span>
      <svg viewBox="0 0 56 62" fill="none" stroke="#ffffff" strokeOpacity="0.85" strokeWidth="4" strokeLinejoin="round">
        <path d="M15 5 L53 31 L15 57 Z" />
        <path d="M6 52 V12 Q6 8 10 9 M24 19 L41 31 L24 43 Z" strokeWidth="3" />
      </svg>
      <span>RUN</span>
    </Watermark>
  </PhoneWindow>
);

const TaskbarRow = () => (
  <Taskbar aria-label="Taskbar">
    <StartButton aria-label="Start">
      <svg viewBox="0 0 18 18" fill="#fff"><path d="M1 3.300 L8 2.300 V8.500 H1 Z M9 2.100 L17 1 V8.500 H9 Z M1 9.500 H8 V15.700 L1 14.700 Z M9 9.500 H17 V17 L9 15.900 Z" /></svg>
    </StartButton>
    <SearchBox>
      <svg viewBox="0 0 17 17" fill="none" stroke="#111" strokeWidth="1.300"><circle cx="10.500" cy="6.500" r="5.500" /><path d="M6.600 10.400 L0.800 16.200" /></svg>
      <input type="text" placeholder="Type here to search" aria-label="Search" />
    </SearchBox>
    <TaskButton aria-label="Task View">
      <svg viewBox="0 0 24 24" fill="none" stroke="#fff" strokeWidth="1.200"><path d="M4.500 4 V6.500 H14.500 V4 M4.500 20 V17.500 H14.500 V20" /><rect x="4.500" y="8.500" width="10" height="7" /><path d="M18.500 4 V20" /><rect x="17.500" y="9" width="2" height="2" fill="#fff" /></svg>
    </TaskButton>
    <AppStrip>
      <TaskButton aria-label="Microsoft Edge"><svg viewBox="0 0 48 48"><EdgeShape id="et" /></svg></TaskButton>
      <TaskButton aria-label="File Explorer">
        <svg viewBox="0 0 24 24"><path d="M1.500 3.500 H9 L10.500 5.500 H22.500 V20.500 H1.500 Z" fill="#e8a820" /><path d="M1.500 7 H22.500 V20.500 H1.500 Z" fill="#fcd462" /><path d="M6 20.500 V14.500 Q6 13 7.500 13 H16.500 Q18 13 18 14.500 V20.500 H15 V16.500 H9 V20.500 Z" fill="#3d9be0" /></svg>
      </TaskButton>
      <TaskButton aria-label="Firefox"><svg viewBox="0 0 48 48"><FoxShape id="fxt" /></svg></TaskButton>
      <TaskButton $state="running" aria-label="Task Manager">
        <svg viewBox="0 0 24 24"><path d="M1 5 L6 3 V17 L1 16 Z" fill="#a7b0b5" /><rect x="3" y="4" width="14" height="13" fill="#b9c1c5" stroke="#eef1f2" strokeWidth="0.800" /><rect x="6" y="3" width="16" height="12" fill="#e3e9ec" stroke="#9aa4aa" strokeWidth="0.800" /><path d="M7 12 L9.500 8 L11.500 12 L13.500 5.500 L16 11 L18 7.500 L20 12 L22 10" fill="none" stroke="#7793a6" /><path d="M13 15 H17 L18 18 Q21 19 20.500 21 Q16 23.500 10.500 21 Q10.500 19 12.500 18 Z" fill="#cdd3d6" /></svg>
      </TaskButton>
      <TaskButton $state="active" aria-label="MicroSIP"><PhoneBall id="ballTask" /></TaskButton>
    </AppStrip>
    <Tray>
      <TrayButton aria-label="Show hidden icons"><svg viewBox="0 0 18 18"><path d="M4 11.500 L9 6.500 L14 11.500" fill="none" stroke="#fff" strokeWidth="1.300" /></svg></TrayButton>
      <TrayButton aria-label="Meet now">
        <svg viewBox="0 0 18 18" fill="none" stroke="#fff" strokeWidth="1.200"><rect x="4" y="6" width="7.500" height="7" rx="1" /><path d="M11.500 8.800 L14.500 7 V12 L11.500 10.200 M5.500 3 Q9 1 12.500 3 M5.500 16 Q9 17.800 12.500 16" /></svg>
      </TrayButton>
      <TrayButton aria-label="Network">
        <svg viewBox="0 0 18 18" fill="none" stroke="#fff" strokeWidth="1.200"><path d="M6.500 4.500 H16.500 V12.500 H4 V8 M10.500 12.500 V15.500 M7 15.500 H14" /><path d="M1.500 3 H5.500 V7.500 H1.500 Z M3.500 3 V5" /></svg>
      </TrayButton>
      <TrayButton aria-label="Volume">
        <svg viewBox="0 0 18 18" fill="none" stroke="#fff" strokeWidth="1.200"><path d="M1 7 H3.500 L7 3.500 V14.500 L3.500 11 H1 Z M9.500 6.500 Q11 9 9.500 11.500 M11.800 4.800 Q14.500 9 11.800 13.200 M14 3 Q18 9 14 15" /></svg>
      </TrayButton>
      <Clock>11:53 PM<br />5/17/2025</Clock>
      <Notify aria-label="Notifications">
        <svg viewBox="0 0 18 18" fill="none" stroke="#fff" strokeWidth="1.300"><path d="M1.500 2.500 H16.500 V14 H11.500 L9 16.500 L6.500 14 H1.500 Z" /></svg>
      </Notify>
      <ShowDesktop />
    </Tray>
  </Taskbar>
);

export default function App() {
  return (
    <>
      <GlobalStyle />
      <Screen>
        <Wallpaper />
        <DesktopArea>
          <DesktopIcons />
          <TaskManager />
          <MicroSip />
        </DesktopArea>
        <TaskbarRow />
      </Screen>
    </>
  );
}
